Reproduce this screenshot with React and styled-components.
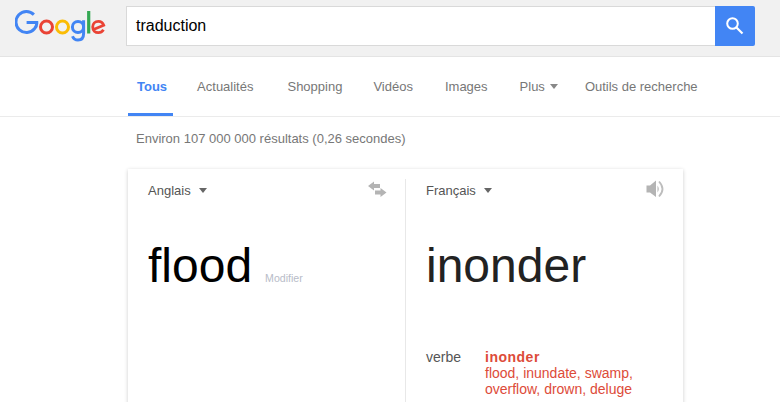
import React from 'react';
import styled, { createGlobalStyle } from 'styled-components';

const Global = createGlobalStyle`
  html, body { margin: 0; padding: 0; background: #fff; overflow: hidden; }
  body { font-family: "Liberation Sans", Arial, sans-serif; }
`;
const Page = styled.div`
  width: 780px; height: 402px; overflow: hidden; display: flex; flex-direction: column;
`;
const Header = styled.header`
  height: 57px; box-sizing: border-box; flex: none; background: #f1f1f1; border-bottom: 1px solid #e4e4e4;
  display: flex; align-items: flex-start; padding: 6px 0 0 15px;
`;
const Logo = styled.svg`
  width: 92px; height: 32px; margin-top: 4px; margin-right: 19px; flex: none;
`;
const SearchBox = styled.div`
  width: 589px; height: 40px; box-sizing: border-box; background: #fff; border: 1px solid #d9d9d9; border-right: none;
  display: flex; align-items: center; padding: 0 9px;
  font-size: 16px; color: #000;
`;
const SearchButton = styled.div`
  width: 40px; height: 40px; background: #4285f4; border-radius: 0 2px 2px 0;
  display: flex; align-items: center; justify-content: center;
`;
const Nav = styled.nav`
  height: 60px; box-sizing: border-box; flex: none; border-bottom: 1px solid #ebebeb;
  display: flex; padding-left: 128px;
`;
const Tab = styled.div`
  height: 59px; box-sizing: border-box; display: flex; align-items: center; gap: 5px;
  padding: ${p => p.$active ? '2px 6px 0 9px' : '2px 0 0'};
  margin-right: ${p => p.$gap ?? 0}px;
  font-size: 13px;
  color: ${p => p.$active ? '#4285f4' : '#777'};
  font-weight: ${p => p.$active ? 700 : 400};
  border-bottom: 3px solid ${p => p.$active ? '#4285f4' : 'transparent'};
`;
const Caret = styled.span`
  display: inline-block; width: 0; height: 0; margin-left: ${p => p.$ml ?? 0}px;
  border-left: 4px solid transparent; border-right: 4px solid transparent;
  border-top: 5px solid ${p => p.$color};
`;
const Stats = styled.div`
  height: 52px; box-sizing: border-box; flex: none; padding: 14px 0 0 136px;
  font-size: 13px; line-height: 16px; color: #777;
`;
const Card = styled.section`
  margin-left: 128px; width: 555px; height: 300px; flex: none; background: #fff;
  box-shadow: 0 1px 4px rgba(0,0,0,0.2); display: grid; grid-template-columns: 278px 1fr;
`;
const Pane = styled.div`
  position: relative; box-sizing: border-box; padding: 13px 0 0 20px;
  &:first-child::after {
    content: ""; position: absolute; right: 0; top: 10px; bottom: 0; width: 1px; background: #e8e8e8;
  }
`;
const LangRow = styled.div`
  display: flex; align-items: center; height: 16px; font-size: 13px; color: #555;
`;
const PaneIcon = styled.svg`
  position: absolute; top: ${p => p.$top}px; right: ${p => p.$right}px;
`;
const WordRow = styled.div`
  display: flex; align-items: baseline; margin-top: 38px; height: 60px; line-height: 60px;
`;
const BigWord = styled.span`
  font-size: 48px; color: ${p => p.$color};
`;
const Modify = styled.span`
  font-size: 10.6px; color: #b8bcc8; margin-left: 13px;
`;
const DefRow = styled.div`
  display: flex; margin-top: 53px; font-size: 14px; line-height: 16px;
`;
const Pos = styled.div`
  width: 59px; color: #555; flex: none;
`;
const Defs = styled.div`
  color: #dd4b39;
`;
const Strong = styled.div`
  font-weight: 700; letter-spacing: 0.5px;
`;

export default function App() {
  return (
    <Page>
      <Global />
      <Header>
        <Logo viewBox="0 0 92 32" aria-label="Google">
          <path d="M18.9 4.6 A10.5 10.5 0 1 0 19.5 18.8 Q22 16.2 21.8 12.6 H11.6" fill="none" stroke="#4285f4" strokeWidth="3" />
          <circle cx="31.5" cy="17" r="6" fill="none" stroke="#ea4335" strokeWidth="3" />
          <circle cx="47.5" cy="17" r="6" fill="none" stroke="#fbbc05" strokeWidth="3" />
          <circle cx="63" cy="17" r="5.6" fill="none" stroke="#4285f4" strokeWidth="3" />
          <path d="M68.6 10.2 V23.5 C68.6 28.5 66 30 63 30 C60.5 30 58.4 28.5 57.5 26.2" fill="none" stroke="#4285f4" strokeWidth="3" />
          <path d="M73.7 1 V23.5" fill="none" stroke="#34a853" strokeWidth="3.2" />
          <path d="M78.5 19.5 L88.7 15.2 C87.8 12.5 85.8 11.3 83.4 11.3 C80 11.3 77.7 13.8 77.7 17 C77.7 20.4 80.2 22.7 83.4 22.7 C85.6 22.7 87.3 21.7 88.5 19.8" fill="none" stroke="#ea4335" strokeWidth="2.8" />
        </Logo>
        <SearchBox>traduction</SearchBox>
        <SearchButton>
          <svg width="24" height="24" viewBox="0 0 24 24" fill="none" stroke="#fff">
            <circle cx="9.5" cy="9.5" r="5.3" strokeWidth="2" />
            <path d="M13.5 13.5 L19.5 19.5" strokeWidth="2.2" />
          </svg>
        </SearchButton>
      </Header>
      <Nav>
        <Tab $active $gap={24}>Tous</Tab>
        <Tab $gap={34}>Actualités</Tab>
        <Tab $gap={31}>Shopping</Tab>
        <Tab $gap={32}>Vidéos</Tab>
        <Tab $gap={32}>Images</Tab>
        <Tab $gap={27}>Plus<Caret $color="#888" /></Tab>
        <Tab>Outils de recherche</Tab>
      </Nav>
      <Stats>Environ 107 000 000 résultats (0,26 secondes)</Stats>
      <Card>
        <Pane>
          <LangRow>Anglais<Caret $ml={8} $color="#666" /></LangRow>
          <PaneIcon $top={12} $right={19} width="20" height="16" viewBox="0 0 20 16" fill="#b4b4b4">
            <path d="M1 5 L7 0.5 V3 H13 V7 H7 V9.5 Z" />
            <path d="M19.5 11.5 L13.5 7 V9.5 H8 V13.5 H13.5 V16 Z" />
          </PaneIcon>
          <WordRow>
            <BigWord $color="#000">flood</BigWord>
            <Modify>Modifier</Modify>
          </WordRow>
        </Pane>
        <Pane>
          <LangRow>Français<Caret $ml={8} $color="#666" /></LangRow>
          <PaneIcon $top={10} $right={18} width="20" height="20" viewBox="0 0 20 20" fill="none">
            <path d="M1.5 6.5 H5 L11 1.5 V18 L5 13.5 H1.5 Z" fill="#b4b4b4" />
            <path d="M12.5 6.5 Q15 10 12.5 13.5 Z" fill="#b4b4b4" />
            <path d="M14 2.5 Q21 10 14 17.5" stroke="#bdbdbd" strokeWidth="1.8" />
          </PaneIcon>
          <WordRow>
            <BigWord $color="#222">inonder</BigWord>
          </WordRow>
          <DefRow>
            <Pos>verbe</Pos>
            <Defs>
              <Strong>inonder</Strong>
              flood, inundate, swamp,<br />overflow, drown, deluge
            </Defs>
          </DefRow>
        </Pane>
      </Card>
    </Page>
  );
}
